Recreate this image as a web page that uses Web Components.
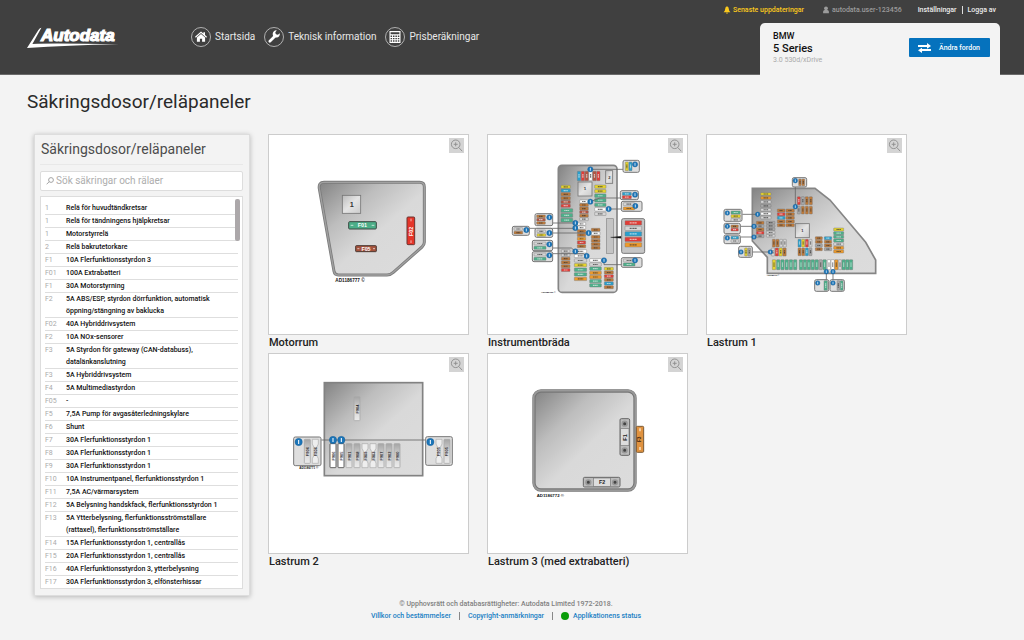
<!DOCTYPE html>
<html lang="sv">
<head>
<meta charset="utf-8">
<meta name="viewport" content="width=device-width, initial-scale=1">
<title>Säkringsdosor/reläpaneler</title>
<style>
  body { margin: 0; background: #f3f3f3; color: #222; font-family: Roboto, "Liberation Sans", sans-serif; }
</style>
</head>
<body>
<ad-page></ad-page>

<script>
const define = (name, html, setup) => customElements.define(name, class extends HTMLElement {
  connectedCallback() {
    if (this.shadowRoot) return;
    const root = this.attachShadow({ mode: 'open' });
    root.innerHTML = html;
    if (setup) setup.call(this, root);
  }
});

/* ---------- diagram drawing helpers ---------- */
const COLORS = { y: '#e6d42c', b: '#27a0cf', o: '#c07a38', r: '#e23c36', g: '#4cb08a', w: '#ffffff',
                 s: '#d6d6d6', a: '#ee9a2a', d: '#a9a9a9', m: '#b4533f' };
const fuse = (x, y, w, h, c) => {
  const ink = c === 'r' || c === 'g' || c === 'b' || c === 'm' ? '#e9efed' : '#333';
  const mark = w > h
    ? `<path d="M${x + w * .28} ${y + h / 2}h${w * .44}" stroke="${ink}" stroke-opacity=".7" stroke-width="3.5" stroke-dasharray="4 1"/>`
    : `<path d="M${x + w / 2} ${y + h * .28}v${h * .44}" stroke="${ink}" stroke-opacity=".7" stroke-width="3.5" stroke-dasharray="4 1"/>`;
  return `<rect x="${x}" y="${y}" width="${w}" height="${h}" rx="1.5" fill="${COLORS[c]}" stroke="#777" stroke-width="1.3"/>${mark}`;
};
const col = (x, y, w, h, step, codes) => [...codes].map((c, i) => c === ' ' ? '' : fuse(x, y + i * step, w, h, c)).join('');
const row = (x, y, w, h, step, codes) => [...codes].map((c, i) => c === ' ' ? '' : fuse(x + i * step, y, w, h, c)).join('');
const info = (x, y, r = 8) => `<circle cx="${x}" cy="${y}" r="${r}" fill="#1b75b8" stroke="#14568a" stroke-width="1"/><path d="M${x} ${y - r * .55}v${r * 1.1}" stroke="#fff" stroke-width="${r * .28}"/>`;
const box = (x, y, w, h, fill = '#dedede') => `<rect x="${x}" y="${y}" width="${w}" height="${h}" rx="5" fill="${fill}" stroke="#777" stroke-width="3"/>`;
const lines = d => `<path d="${d}" fill="none" stroke="#666" stroke-width="2.5"/>`;
const relay = (x, y, w, h) => `<rect x="${x}" y="${y}" width="${w}" height="${h}" fill="url(#rel)" stroke="#777" stroke-width="2.5"/>`;
const word = (x, y, size, t, fill = '#333', turn = 0) =>
  `<text x="${x}" y="${y}" font-size="${size}" font-weight="700" fill="${fill}" text-anchor="middle" dominant-baseline="central"${turn ? ` transform="rotate(${turn} ${x} ${y})"` : ''}>${t}</text>`;

const terminalFuse = (x, y, kind, label) => {
  let s = `<rect x="${x}" y="${y}" width="18" height="72" rx="2" fill="${kind === 'w' ? '#fff' : 'url(#fade)'}" stroke="${kind === 'w' ? '#444' : '#aaa'}" stroke-width="2.5"/>`;
  if (kind === 'x') s = `<path d="M${x} ${y}h18v14l-5 10v24l5 10v14h-18v-14l5-10v-24l-5-10z" fill="#eee" stroke="#aaa" stroke-width="2"/>`;
  return s + word(x + 9, y + 37, 12, label, '#222', -90);
};

const DIAGRAMS = {
  motorrum: { view: '12 15 597 597', draw: () => `
    <path d="M177 157H464Q478 157 478 171V337Q478 345 471 351L385 427Q376 435 366 435H220Q209 435 207 424L163 176Q160 157 177 157Z" fill="url(#panel)" stroke="#7b7b7b" stroke-width="9"/>
    <path d="M177 157H464Q478 157 478 171V337Q478 345 471 351L385 427Q376 435 366 435H220Q209 435 207 424L163 176Q160 157 177 157Z" fill="none" stroke="#a0a0a0" stroke-width="4"/>
    ${relay(232, 196, 55, 54)}${word(260, 223, 22, '1')}
    <rect x="251" y="275" width="83" height="22" rx="3" fill="#4cae88" stroke="#3c4a44" stroke-width="3"/>
    <path d="M257 286h8M320 286h8" stroke="#fff" stroke-width="2"/>${word(292, 286, 16, 'F01', '#fff')}
    <rect x="272" y="347" width="62" height="18" rx="2" fill="#a5533d" stroke="#4b3934" stroke-width="3"/>
    <path d="M277 356h6M324 356h6" stroke="#fff" stroke-width="2"/>${word(303, 356, 16, 'F05', '#fff')}
    <rect x="426" y="261" width="23" height="83" rx="3" fill="#e53529" stroke="#6b3430" stroke-width="3"/>
    <path d="M438 266v8M438 331v8" stroke="#fff" stroke-width="2"/>${word(438, 304, 16, 'F02', '#fff', -90)}
    ${word(255, 451, 14, 'AD1186777 ©', '#111')}` },

  instrument: { view: '-36 -45 597 597', draw: () => `
    <rect x="175" y="46" width="176" height="381" rx="11" fill="url(#panel)" stroke="#858585" stroke-width="5"/>
    ${row(232, 64, 10, 28, 11.6, 'brmwmr')}
    ${relay(234, 96, 42, 42)}${word(255, 116, 13, '1')}
    ${relay(317, 62, 21, 38)}${word(328, 82, 12, '2')}
    <rect x="319" y="206" width="21" height="104" fill="#c4c4c4" stroke="#888" stroke-width="2"/>
    ${col(183, 106, 28, 9, 11.3, 'yboomr')}${col(183, 176, 35, 11, 14.5, 'ggg')}
    ${col(284, 105, 34, 10, 13.6, 'yygggws')}${col(239, 150, 26, 9, 10.6, 'woomos')}
    ${col(232, 217, 25, 9, 11.2, 'wwooaro')}${col(274, 235, 26, 9, 10.8, 'owoooo')}
    ${col(184, 299, 26, 9, 11.3, 'ssooor')}${col(223, 299, 37, 10, 13.8, 'wwsygga')}
    ${col(269, 326, 35, 10, 12.5, 'wsgaagg')}${col(313, 352, 27, 9, 11, 'yorobo')}
    ${lines('M271 58H369M271 155L300 144H361M326 177H364M158 219H226M89 235H226M158 249H266M158 294H214L226 304M158 311H250L260 318M312 331V344H364')}
    <path d="M332 262L364 259V265Z" fill="#111" stroke="#111"/>
    ${box(369, 31, 49, 36)}${row(376, 36, 9, 26, 11, 'yb')}
    ${box(361, 122, 54, 27)}${col(367, 127, 27, 9, 10, 'br')}
    ${box(364, 154, 62, 30)}${col(370, 158, 34, 9, 13, 'sa')}
    ${box(105, 191, 53, 36)}${col(110, 195, 26, 8, 10, 'omo')}
    ${box(37, 229, 51, 27)}${col(42, 233, 26, 8, 11, 'so')}
    ${box(105, 235, 53, 27)}${col(111, 240, 26, 8, 11, 'sy')}
    ${box(97, 271, 61, 31)}${col(102, 276, 36, 9, 13, 'sg')}
    ${box(97, 305, 61, 30)}${col(102, 309, 36, 9, 13, 'sg')}
    ${box(364, 323, 62, 29)}${col(370, 327, 35, 9, 12, 'sg')}
    ${box(365, 206, 69, 104, '#c6c6c6')}${col(375, 212, 50, 13, 16.5, 'rsbra')}
    ${[[271,58],[271,155],[326,177],[226,219],[226,234],[266,249],[226,304],[260,318],[312,331],[405,43],[405,134],[406,168],[148,202],[79,240],[148,249],[148,283],[148,316],[405,331]].map(p => info(...p)).join('')}
    ${word(145, 426, 7, 'AD1186769 ©', '#111')}` },

  lastrum1: { view: '-24 -90 597 597', draw: () => `
    <path d="M112 70H300L345 105L452 232L482 285V325H157V277L112 228Z" fill="url(#panel)" stroke="#858585" stroke-width="5"/>
    ${col(137, 83, 31, 8, 11.8, 'yasdsws')}${col(124, 169, 23, 9, 10, 'odord')}${col(154, 169, 26, 8, 9.8, 'dddss')}
    ${col(187, 132, 23, 9, 11, 'orboo')}${col(213, 132, 25, 9, 11, 'ooooo')}
    ${row(247, 95, 9, 24, 12, 'rdoo')}${row(247, 124, 9, 23, 12, 'dooo')}
    ${relay(241, 176, 42, 42)}${word(262, 197, 12, '1')}
    ${row(172, 223, 9, 23, 11, 'ooss')}${row(169, 249, 10, 24, 11.5, 'sryo')}
    ${row(249, 223, 9, 23, 11, 'byrs')}${row(249, 249, 9, 23, 11, 'oobd')}
    ${col(301, 215, 21, 9, 11, 'oodo')}${col(328, 215, 22, 9, 11, 'bood')}
    ${col(356, 189, 30, 9, 11, 'ygggsaa')}
    ${row(172, 284, 10, 30, 12.7, 'yggggg')}${row(253, 284, 10, 30, 11.8, 'gggggdg')}${row(337, 284, 10, 30, 11, 'wwasggg')}
    ${lines('M241 47V125M82 148H128M77 184H118M77 216H118M112 261H166M334 320V345M354 320V345')}
    ${box(232, 38, 43, 28)}${row(251, 42, 8, 20, 10, 'oo')}
    ${box(27, 133, 54, 36)}${col(48, 138, 28, 9, 11, 'gys')}
    ${box(27, 175, 49, 31)}${col(48, 180, 22, 8, 10, 'or')}
    ${box(27, 210, 49, 26)}${col(48, 214, 23, 8, 10, 'bs')}
    ${box(71, 244, 41, 33)}${row(89, 249, 8, 24, 10, 'yd')}
    ${box(299, 344, 42, 35)}${row(327, 347, 10, 29, 11, 'g')}${box(345, 344, 43, 35)}${row(366, 347, 8, 29, 10, 'dg')}
    ${[[241,47],[241,125],[128,148],[117,184],[117,216],[166,261],[334,320],[354,320],[37,144],[37,184],[37,219],[78,261],[308,354],[354,354]].map(p => info(...p, 7)).join('')}
    ${word(174, 331, 6, 'AD1186770 ©', '#111')}` },

  lastrum2: { view: '-48 -63 597 597', draw: () => `
    <rect x="118" y="23" width="295" height="279" fill="url(#panel)" stroke="#828282" stroke-width="5"/>
    ${terminalFuse(207, 65, 'f', 'F904')}
    ${lines('M109 195H421')}
    ${['w','w','f','f','x','x','f','f','f'].map((k, i) => terminalFuse(135 + i * 24, 206, k, ['F906','F905','F901','F908','F909','F903','F907','F902','F900'][i])).join('')}
    ${box(26, 186, 82, 86)}${terminalFuse(58, 193, 'f', 'F906')}${terminalFuse(82, 193, 'x', 'F906')}
    ${box(422, 185, 80, 86)}${terminalFuse(453, 193, 'x', 'F905')}${terminalFuse(477, 193, 'f', 'F905')}
    ${info(41, 201, 11)}${info(144, 195, 11)}${info(169, 195, 11)}${info(436, 201, 11)}
    ${word(71, 280, 9, 'AD1186771 ©', '#111')}` },

  lastrum3: { view: '12 12 597 597', draw: () => `
    <rect x="150" y="123" width="303" height="297" rx="21" fill="url(#panel)" stroke="#777" stroke-width="10"/>
    <rect x="149" y="122" width="305" height="299" rx="22" fill="none" stroke="#999" stroke-width="5"/>
    <rect x="408" y="206" width="29" height="110" rx="4" fill="#bcbcbc" stroke="#666" stroke-width="3"/>
    <rect x="410" y="236" width="25" height="51" fill="#ddd" stroke="#777" stroke-width="2"/>
    <circle cx="422" cy="221" r="7" fill="#444" stroke="#999" stroke-width="5"/><circle cx="422" cy="301" r="7" fill="#444" stroke="#999" stroke-width="5"/>
    ${word(423, 262, 17, 'F1', '#222', -90)}
    <rect x="298" y="382" width="110" height="29" rx="4" fill="#bcbcbc" stroke="#666" stroke-width="3"/>
    <rect x="328" y="384" width="51" height="25" fill="#ddd" stroke="#777" stroke-width="2"/>
    <circle cx="313" cy="397" r="7" fill="#444" stroke="#999" stroke-width="5"/><circle cx="393" cy="397" r="7" fill="#444" stroke="#999" stroke-width="5"/>
    ${word(354, 397, 16, 'F2', '#222')}
    <rect x="457" y="229" width="22" height="78" rx="3" fill="#e0923f" stroke="#7a5a35" stroke-width="3"/>
    <path d="M468 235v9M468 291v9" stroke="#f6d9b6" stroke-width="5"/>${word(468, 268, 14, 'F3', '#3a2410', -90)}
    ${word(199, 437, 13, 'AD1186772 ©', '#111')}` }
};

define('box-diagram', `
  <style>:host { display: block; } svg { display: block; width: 100%; aspect-ratio: 1; font-family: "Liberation Sans", sans-serif; }</style>
  <svg role="img"></svg>`, function (root) {
  const d = DIAGRAMS[this.getAttribute('name')];
  const svg = root.querySelector('svg');
  svg.setAttribute('viewBox', d.view);
  svg.innerHTML = `<defs>
    <linearGradient id="panel" x1="0" y1="0" x2="1" y2="1"><stop offset="0" stop-color="#838383"/><stop offset=".3" stop-color="#bdbdbd"/><stop offset=".55" stop-color="#d9d9d9"/><stop offset="1" stop-color="#dcdcdc"/></linearGradient>
    <linearGradient id="rel" x1="0" y1="0" x2="1" y2="1"><stop offset="0" stop-color="#bbb"/><stop offset=".5" stop-color="#e4e4e4"/><stop offset="1" stop-color="#ccc"/></linearGradient>
    <linearGradient id="fade" x1="0" y1="0" x2="0" y2="1"><stop offset="0" stop-color="#a5a5a5"/><stop offset=".5" stop-color="#d4d4d4"/><stop offset="1" stop-color="#ececec"/></linearGradient>
  </defs>` + d.draw();
});

define('box-tile', `
  <style>
    :host { display: block; }
    figure { margin: 0; }
    .frame { position: relative; background: #fff; border: 1px solid #ccc; }
    button { position: absolute; top: 3px; right: 4px; width: 15px; height: 15px; padding: 0; border: 0; background: #d4d4d4; cursor: pointer; }
    button svg { display: block; width: 15px; height: 15px; }
    figcaption { font-size: 11px; line-height: 14px; font-weight: 500; padding: 1px 0 0 1px; color: #222; }
  </style>
  <figure>
    <div class="frame"><slot name="diagram"></slot>
      <button type="button" aria-label="Förstora"><svg viewBox="0 0 15 15" fill="none" stroke="#8c8c8c" stroke-width=".9"><circle cx="6.7" cy="6.3" r="4.3"/><path d="M6.7 4.3v4M4.7 6.3h4M9.8 9.5l3.4 3.7"/></svg></button>
    </div>
    <figcaption><slot></slot></figcaption>
  </figure>`);

define('ad-logo', `
  <style>:host { display: block; } a, svg { display: block; } svg { width: 92px; height: 22px; }</style>
  <a href="#" aria-label="Autodata"><svg viewBox="0 0 92 22"><path d="M14.400 .8L5.400 16.900Q28 16 92 17.300Q40 18.300 0 21L11.400 3Q13 .9 14.400 .8Z" fill="#fff"/>
  <text x="14" y="14" font-family="Liberation Sans" font-size="17" font-weight="700" font-style="italic" fill="#fff" stroke="#fff" stroke-width="1.200">Autodata</text></svg></a>`);

const ICONS = {
  home: '<path fill="#fff" d="M10 4.4L4 9.8l.8.9L10 6.1l5.200 4.600.8-.9-2-1.800V5.200h-1.600v1.400zM5.900 10.600V14.800h3v-3h2.200v3h3v-4.200L10 7z"/>',
  wrench: '<path fill="none" stroke="#fff" stroke-width="2.700" stroke-linecap="round" d="M5.800 14.200L11.300 8.700"/><path fill="#fff" d="M15.800 6.300a3.600 3.600 0 1 1-3.100-2.900L11.300 5.200l.5 2.100 2.100.4z"/>',
  calc: '<path fill="#fff" fill-rule="evenodd" d="M4.500 4h11v12h-11zM5.600 5.200v2h8.800v-2zM5.600 8.500v1.400h1.500V8.500zm2.400 0v1.400h1.500V8.500zm2.400 0v1.400h1.500V8.500zm2.400 0v1.400h1.500V8.500zM5.600 10.900v1.400h1.500v-1.400zm2.400 0v1.400h1.500v-1.400zm2.400 0v1.400h1.500v-1.400zm2.400 0v1.400h1.500v-1.400zM5.600 13.300v1.400h1.500v-1.400zm2.400 0v1.400h1.500v-1.400zm2.400 0v1.400h1.500v-1.400zm2.400 0v1.400h1.500v-1.400z"/>'
};
define('nav-item', `
  <style>
    :host { display: block; }
    a { display: flex; align-items: center; gap: 4px; color: #e8e8e8; font-size: 10px; line-height: 20px; text-decoration: none; white-space: nowrap; }
    svg { width: 20px; height: 20px; flex: none; }
  </style>
  <a href="#"><svg viewBox="0 0 20 20"><circle cx="10" cy="10" r="9.500" fill="none" stroke="#ccc" stroke-width=".8"/><g></g></svg><slot></slot></a>`, function (root) {
  root.querySelector('g').innerHTML = ICONS[this.getAttribute('icon')];
});

define('user-bar', `
  <style>
    :host { display: flex; align-items: center; justify-content: flex-end; font-size: 7px; line-height: 10px; font-weight: 500; white-space: nowrap; color: #ececec; }
    a { color: inherit; text-decoration: none; }
    .news { display: flex; gap: 2px; color: #fbc91d; margin-right: 18px; }
    .user { display: flex; gap: 2px; color: #9c9c9c; margin-right: 16px; }
    svg { width: 8px; height: 8px; margin-top: 1px; }
    .last { border-left: 1px solid #ddd; margin-left: 5px; padding-left: 5px; line-height: 8px; }
  </style>
  <a class="news" href="#"><svg viewBox="0 0 8 8" fill="#fbc91d"><path d="M4 .3Q5.800.600 5.900 3.200L6.200 4.800L7.400 6.300H.6L1.800 4.800L2.100 3.200Q2.200.6 4 .3ZM3 6.700h2Q4.700 7.700 4 7.700T3 6.700Z"/></svg>Senaste uppdateringar</a>
  <span class="user"><svg viewBox="0 0 8 8" fill="#9c9c9c"><circle cx="4" cy="2.300" r="1.900"/><path d="M1.100 7.300V5.800Q1.200 4.200 2.700 4.100H5.300Q6.800 4.200 6.900 5.800V7.300Z"/></svg>autodata.user-123456</span>
  <a href="#">Inställningar</a><a class="last" href="#">Logga av</a>`);

define('vehicle-card', `
  <style>
    :host { display: flex; justify-content: space-between; align-items: flex-start; box-sizing: border-box; background: #f3f3f3; border-radius: 5px 5px 0 0; padding: 8px 10px 10px 13px; }
    .make { font-size: 9px; line-height: 11px; font-weight: 500; color: #111; }
    .model { font-size: 11px; line-height: 13px; font-weight: 500; color: #111; }
    .trim { font-size: 7px; line-height: 10px; color: #aaa; }
    button { display: flex; align-items: center; justify-content: space-between; width: 81px; height: 19px; margin-top: 7px; padding: 1px 10px 0 9px; border: 0; border-radius: 1px; background: #0572bd; color: #fff; font: 500 7px/10px Roboto, sans-serif; white-space: nowrap; }
    svg { width: 13px; height: 10px; }
  </style>
  <div><div class="make">BMW</div><div class="model">5 Series</div><div class="trim">3.0 530d/xDrive</div></div>
  <button type="button"><svg viewBox="0 0 13 10"><path fill="#fff" d="M0 2h9V0l4 3-4 2.700V4H0zM13 8H4v2L0 7.200 4 4.700V6h9z"/></svg>Ändra fordon</button>`);

define('ad-header', `
  <style>
    :host { display: flex; align-items: stretch; background: #404040; box-shadow: inset 0 -1px #6a6a6a; padding: 0 24px 0 27px; }
    ad-logo { margin: 27px 72px 0 0; }
    nav { display: flex; align-items: flex-start; gap: 9px; padding-top: 27px; }
    .right { margin-left: auto; display: flex; flex-direction: column; align-items: flex-end; }
    user-bar { padding: 5px 4px 8px 0; }
    vehicle-card { width: 240px; }
  </style>
  <ad-logo></ad-logo>
  <nav><nav-item icon="home">Startsida</nav-item><nav-item icon="wrench">Teknisk information</nav-item><nav-item icon="calc">Prisberäkningar</nav-item></nav>
  <div class="right"><user-bar></user-bar><vehicle-card></vehicle-card></div>`);

const FUSES = [
  ['1', 'Relä för huvudtändkretsar'], ['1', 'Relä för tändningens hjälpkretsar'], ['1', 'Motorstyrrelä'],
  ['2', 'Relä bakrutetorkare'], ['F1', '10A Flerfunktionsstyrdon 3'], ['F01', '100A Extrabatteri'], ['F1', '30A Motorstyrning'],
  ['F2', '5A ABS/ESP, styrdon dörrfunktion, automatisk öppning/stängning av baklucka'], ['F02', '40A Hybriddrivsystem'],
  ['F2', '10A NOx-sensorer'], ['F3', '5A Styrdon för gateway (CAN-databuss), datalänkanslutning'], ['F3', '5A Hybriddrivsystem'],
  ['F4', '5A Multimediastyrdon'], ['F05', '-'], ['F5', '7,5A Pump för avgasåterledningskylare'], ['F6', 'Shunt'],
  ['F7', '30A Flerfunktionsstyrdon 1'], ['F8', '30A Flerfunktionsstyrdon 1'], ['F9', '30A Flerfunktionsstyrdon 1'],
  ['F10', '10A Instrumentpanel, flerfunktionsstyrdon 1'], ['F11', '7,5A AC/värmarsystem'],
  ['F12', '5A Belysning handskfack, flerfunktionsstyrdon 1'],
  ['F13', '5A Ytterbelysning, flerfunktionsströmställare (rattaxel), flerfunktionsströmställare'],
  ['F14', '15A Flerfunktionsstyrdon 1, centrallås'], ['F15', '20A Flerfunktionsstyrdon 1, centrallås'],
  ['F16', '40A Flerfunktionsstyrdon 3, ytterbelysning'], ['F17', '30A Flerfunktionsstyrdon 3, elfönsterhissar']
];
define('fuse-list', `
  <style>
    :host { display: block; position: relative; background: #fff; border: 1px solid #ddd; padding: 5px 4px 0; }
    table { width: 100%; border-collapse: separate; border-spacing: 0; table-layout: fixed; font-size: 7px; line-height: 12px; }
    th, td { padding: 0; text-align: left; vertical-align: top; border-bottom: 1px solid #dedede; }
    th { width: 21px; font-weight: 400; color: #aaa; }
    td { color: #111; font-weight: 500; padding-right: 12px; }
    tr:last-child > * { border-bottom: 0; }
    .thumb { position: absolute; top: 2px; right: 2px; width: 5px; height: 42px; border-radius: 2px; background: #aca8aa; }
  </style>
  <table><tbody></tbody></table><div class="thumb"></div>`, function (root) {
  root.querySelector('tbody').innerHTML = FUSES.map(([c, t]) => `<tr><th scope="row">${c}</th><td>${t}</td></tr>`).join('');
});

define('fuse-search', `
  <style>
    :host { display: flex; align-items: center; gap: 2px; height: 18px; padding: 0 5px; background: #fff; border: 1px solid #ddd; border-radius: 2px; }
    svg { width: 8px; height: 8px; flex: none; }
    label { display: flex; }
    input { flex: 1; min-width: 0; border: 0; padding: 0; outline: 0; background: none; font: 10px/14px Roboto, sans-serif; color: #333; }
    input::placeholder { color: #aeaeae; opacity: 1; }
  </style>
  <label for="q" aria-label="Sök säkringar och rälaer"><svg viewBox="0 0 8 8" fill="none" stroke="#9a9a9a" stroke-width=".9"><circle cx="5" cy="3" r="2.400"/><path d="M3.200 4.700L.6 7.300"/></svg></label>
  <input id="q" type="text" placeholder="Sök säkringar och rälaer">`);

define('fuse-panel', `
  <style>
    :host { display: block; box-sizing: border-box; background: #f3f3f3; border: 1px solid #ddd; box-shadow: 0 1px 5px rgba(0,0,0,.25); padding: 5px 6px 6px 5px; }
    h2 { margin: 0 0 6px; padding: 0 0 5px 1px; border-bottom: 1px solid #e8e8e8; font-size: 14px; line-height: 19px; font-weight: 400; color: #4c4c4c; }
    fuse-search { margin-bottom: 5px; }
  </style>
  <h2>Säkringsdosor/reläpaneler</h2><fuse-search></fuse-search><fuse-list></fuse-list>`);

define('ad-footer', `
  <style>
    :host { display: block; padding: 2px 12px 12px 0; text-align: center; font-size: 7px; line-height: 12px; font-weight: 500; color: #808080; }
    p { margin: 0; }
    .links { display: flex; justify-content: center; align-items: center; gap: 8px; }
    a { display: flex; align-items: center; gap: 4px; color: #1a7fc4; text-decoration: none; }
    i { width: 1px; height: 8px; background: #888; }
    .dot { width: 8px; height: 8px; border-radius: 50%; background: #0a9d0a; }
  </style>
  <p>© Upphovsrätt och databasrättigheter: Autodata Limited 1972-2018.</p>
  <div class="links"><a href="#">Villkor och bestämmelser</a><i></i><a href="#">Copyright-anmärkningar</a><i></i><a href="#"><span class="dot"></span>Applikationens status</a></div>`);

define('ad-page', `
  <style>
    :host { display: block; }
    main { padding: 14px 24px 0 27px; }
    h1 { margin: 0 0 19px; font-size: 19px; line-height: 26px; font-weight: 400; color: #2a2a2a; }
    .content { display: flex; align-items: flex-start; gap: 18px; padding-left: 7px; }
    fuse-panel { width: 216px; flex: none; }
    .tiles { flex: 1; display: grid; grid-template-columns: repeat(auto-fill, 201px); gap: 3px 18px; }
  </style>
  <ad-header></ad-header>
  <main>
    <h1>Säkringsdosor/reläpaneler</h1>
    <div class="content">
      <fuse-panel></fuse-panel>
      <div class="tiles">
        <box-tile><box-diagram slot="diagram" name="motorrum"></box-diagram>Motorrum</box-tile>
        <box-tile><box-diagram slot="diagram" name="instrument"></box-diagram>Instrumentbräda</box-tile>
        <box-tile><box-diagram slot="diagram" name="lastrum1"></box-diagram>Lastrum 1</box-tile>
        <box-tile><box-diagram slot="diagram" name="lastrum2"></box-diagram>Lastrum 2</box-tile>
        <box-tile><box-diagram slot="diagram" name="lastrum3"></box-diagram>Lastrum 3 (med extrabatteri)</box-tile>
      </div>
    </div>
  </main>
  <ad-footer></ad-footer>`);
</script>
</body>
</html>
